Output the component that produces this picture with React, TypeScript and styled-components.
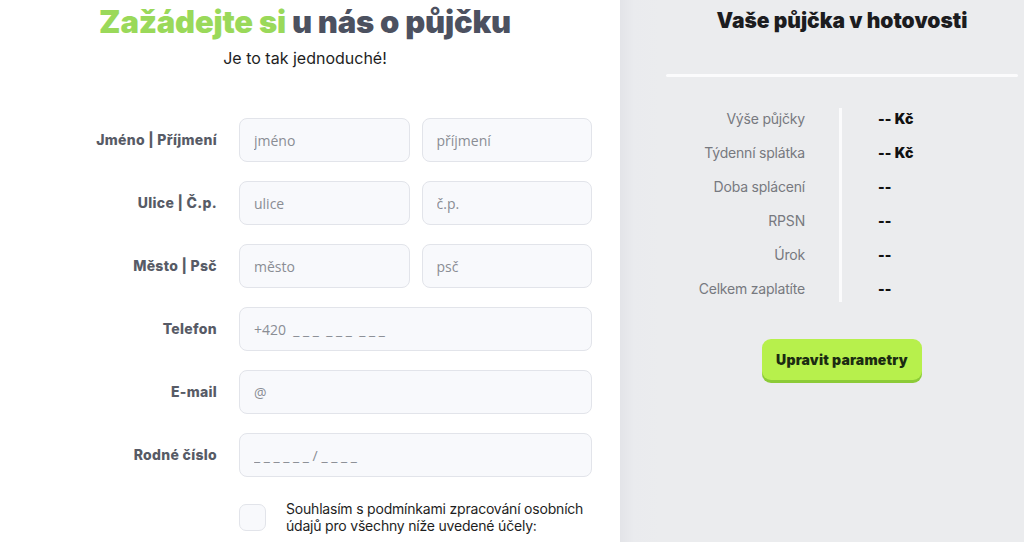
import React from "react";
import styled, { createGlobalStyle } from "styled-components";

const Global = createGlobalStyle`
  html, body { margin: 0; padding: 0; }
  body { font-family: Inter, "Noto Sans", sans-serif; background: #fff; }
  * { box-sizing: border-box; }
`;

const Page = styled.div`
  display: flex;
  width: 1024px;
  height: 542px;
  overflow: hidden;
`;

const FormPanel = styled.section`
  width: 620px;
  flex: none;
  background: #fff;
  display: flex;
  flex-direction: column;
`;

const Heading = styled.h1`
  margin: 2px 0 0 -10px;
  text-align: center;
  font-size: 31px;
  font-weight: 900;
  letter-spacing: -0.2px;
  line-height: 40px;
  color: #4c5160;
`;

const Green = styled.span`
  color: #9ad95a;
`;

const Sub = styled.p`
  margin: 6px 0 0 -10px;
  text-align: center;
  font-size: 16px;
  color: #1e1e1e;
  line-height: 20px;
`;

const Form = styled.div`
  margin-top: 50px;
  display: flex;
  flex-direction: column;
  gap: 19px;
`;

const Row = styled.div`
  display: grid;
  grid-template-columns: 217px minmax(0, 1fr);
  column-gap: 22px;
  align-items: center;
  width: 592px;
`;

const Label = styled.div`
  text-align: right;
  font-size: 14px;
  font-weight: 800;
  letter-spacing: 0.3px;
  color: #575b66;
  margin-top: -2px;
`;

const Fields = styled.div`
  display: flex;
  gap: 12px;
  min-width: 0;
`;

const Input = styled.input`
  flex: 1 1 0;
  width: 100%;
  min-width: 0;
  height: 44px;
  border: 1px solid #e2e4ea;
  border-radius: 8px;
  background: #f8f9fc;
  padding: 0 14px;
  font-family: "Open Sans", sans-serif;
  font-size: 14px;
  color: #333;
  outline: none;
  &::placeholder { color: #8a8d94; }
`;

const ConsentRow = styled.div`
  display: flex;
  gap: 20px;
  margin-left: 239px;
  margin-top: 6px;
  align-items: flex-start;
`;

const Check = styled.div`
  width: 27px;
  height: 27px;
  flex: none;
  border: 1px solid #e2e4ea;
  border-radius: 7px;
  background: #f8f9fc;
  margin-top: 2px;
`;

const ConsentText = styled.p`
  margin: -2px 0 0;
  font-size: 14px;
  line-height: 17px;
  letter-spacing: -0.2px;
  color: #1e1e1e;
  width: 310px;
`;

const Summary = styled.aside`
  flex: 1;
  background: linear-gradient(90deg, #e3e4e8 0px, #eaebee 14px, #ebecee 40px);
  padding: 0 6px 0 46px;
  display: flex;
  flex-direction: column;
`;

const SummaryTitle = styled.h2`
  margin: 7px 0 0;
  text-align: center;
  font-size: 21px;
  font-weight: 900;
  color: #1c1c1f;
  line-height: 28px;
`;

const Divider = styled.hr`
  margin: 39px 0 0;
  border: 0;
  height: 3px;
  background: #fbfbfc;
  border-radius: 2px;
`;

const Table = styled.div`
  margin-top: 31px;
  display: grid;
  grid-template-columns: 1fr 1fr;
`;

const Col = styled.div<{ $side: "l" | "r" }>`
  display: flex;
  flex-direction: column;
  gap: 16px;
  padding: 2px 0 4px;
  text-align: ${(p) => (p.$side === "l" ? "right" : "left")};
  ${(p) =>
    p.$side === "l"
      ? "padding-right: 34px; border-right: 3px solid #fbfbfc;"
      : "padding-left: 36px;"}
`;

const Cell = styled.div<{ $bold?: boolean }>`
  font-size: 14px;
  line-height: 18px;
  letter-spacing: ${(p) => (p.$bold ? "0.2px" : "-0.2px")};
  color: ${(p) => (p.$bold ? "#111" : "#77797f")};
  font-weight: ${(p) => (p.$bold ? 900 : 400)};
  white-space: pre;
`;

const Button = styled.button`
  align-self: center;
  margin-top: 37px;
  width: 160px;
  height: 41px;
  border: 0;
  border-radius: 9px;
  background: #b7f04c;
  box-shadow: 0 3px 0 #8ccb37;
  font-family: Inter, sans-serif;
  font-size: 14px;
  font-weight: 900;
  letter-spacing: 0.2px;
  color: #1b2b12;
  cursor: pointer;
`;

const rows: { label: string; fields: string[] }[] = [
  { label: "Jméno | Příjmení", fields: ["jméno", "příjmení"] },
  { label: "Ulice | Č.p.", fields: ["ulice", "č.p."] },
  { label: "Město | Psč", fields: ["město", "psč"] },
  { label: "Telefon", fields: ["+420  _ _ _  _ _ _  _ _ _"] },
  { label: "E-mail", fields: ["@"] },
  { label: "Rodné číslo", fields: ["_ _ _ _ _ _ / _ _ _ _"] },
];

const summary: [string, string][] = [
  ["Výše půjčky", "-- Kč"],
  ["Týdenní splátka", "-- Kč"],
  ["Doba splácení", "--"],
  ["RPSN", "--"],
  ["Úrok", "--"],
  ["Celkem zaplatíte", "--"],
];

export default function App() {
  return (
    <>
      <Global />
      <Page>
        <FormPanel>
          <Heading>
            <Green>Zažádejte si</Green> u nás o půjčku
          </Heading>
          <Sub>Je to tak jednoduché!</Sub>
          <Form>
            {rows.map((r) => (
              <Row key={r.label}>
                <Label>{r.label}</Label>
                <Fields>
                  {r.fields.map((f) => (
                    <Input key={f} placeholder={f} />
                  ))}
                </Fields>
              </Row>
            ))}
            <ConsentRow>
              <Check />
              <ConsentText>
                Souhlasím s podmínkami zpracování osobních údajů pro všechny níže uvedené účely:
              </ConsentText>
            </ConsentRow>
          </Form>
        </FormPanel>
        <Summary>
          <SummaryTitle>Vaše půjčka v hotovosti</SummaryTitle>
          <Divider />
          <Table>
            <Col $side="l">
              {summary.map(([k]) => (
                <Cell key={k}>{k}</Cell>
              ))}
            </Col>
            <Col $side="r">
              {summary.map(([k, v]) => (
                <Cell key={k} $bold>
                  {v}
                </Cell>
              ))}
            </Col>
          </Table>
          <Button>Upravit parametry</Button>
        </Summary>
      </Page>
    </>
  );
}
